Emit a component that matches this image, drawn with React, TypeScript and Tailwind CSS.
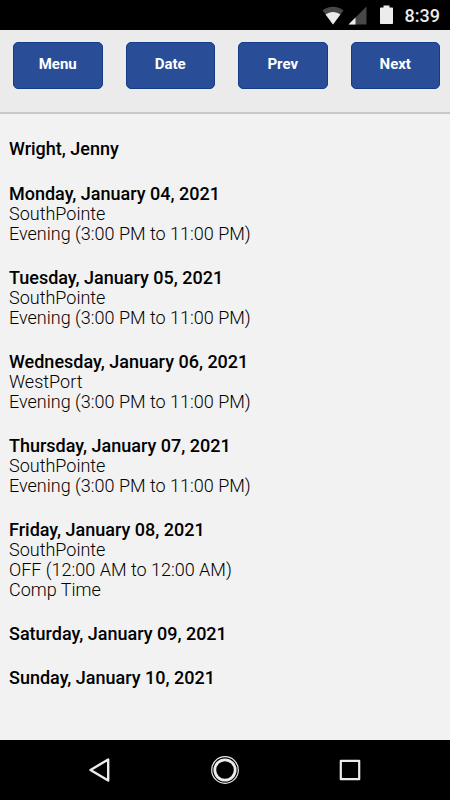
const actions = ['Menu', 'Date', 'Prev', 'Next'];

const shifts = [
  {
    date: 'Monday, January 04, 2021',
    lines: ['SouthPointe', 'Evening (3:00 PM to 11:00 PM)']
  },
  {
    date: 'Tuesday, January 05, 2021',
    lines: ['SouthPointe', 'Evening (3:00 PM to 11:00 PM)']
  },
  {
    date: 'Wednesday, January 06, 2021',
    lines: ['WestPort', 'Evening (3:00 PM to 11:00 PM)']
  },
  {
    date: 'Thursday, January 07, 2021',
    lines: ['SouthPointe', 'Evening (3:00 PM to 11:00 PM)']
  },
  {
    date: 'Friday, January 08, 2021',
    lines: ['SouthPointe', 'OFF (12:00 AM to 12:00 AM)', 'Comp Time']
  },
  { date: 'Saturday, January 09, 2021', lines: [] },
  { date: 'Sunday, January 10, 2021', lines: [] }
];

function StatusBar() {
  return (
    <div className="flex h-[30px] shrink-0 items-center justify-end bg-black pr-[10px] text-[#ececec]">
      <svg width="22" height="19" viewBox="0 0 22 19" fill="currentColor" aria-hidden="true">
        <path d="M0.5 4.5C6.5-0.5 15.5-0.5 21.5 4.5L11 18.5Z" fill="#484848" />
        <path d="M3.6 8.6C8 5.2 14 5.2 18.4 8.6L11 18.5Z" />
      </svg>
      <svg className="ml-1" width="19" height="19" viewBox="0 0 19 19" fill="currentColor" aria-hidden="true">
        <path d="M18.5 0.5V18.5H0.5Z" fill="#484848" />
        <path d="M7.5 11.5V18.5H0.5Z" />
      </svg>
      <svg className="ml-[13px]" width="13" height="20" viewBox="0 0 13 20" fill="currentColor" aria-hidden="true">
        <path d="M3.5 0.5H9.5V2.5H12C12.6 2.5 13 2.9 13 3.5V18C13 18.6 12.6 19 12 19H1C0.4 19 0 18.6 0 18V3.5C0 2.9 0.4 2.5 1 2.5H3.5Z" />
      </svg>
      <span className="ml-3 pt-0.5 text-[18px] leading-5 font-medium">8:39</span>
    </div>
  );
}

function NavBar() {
  return (
    <nav className="flex h-[60px] shrink-0 items-center justify-center gap-[97px] bg-black text-[#ececec]">
      <button type="button" aria-label="Back">
        <svg width="28" height="28" viewBox="0 0 28 28" fill="none" stroke="currentColor" strokeWidth="2.4" strokeLinejoin="round">
          <path d="M22.2 3.5V24.5L4.5 14Z" />
        </svg>
      </button>
      <button type="button" aria-label="Home">
        <svg width="28" height="28" viewBox="0 0 28 28" fill="none" stroke="currentColor">
          <circle cx="14" cy="14" r="13.3" strokeWidth="1.2" />
          <circle cx="14" cy="14" r="10.2" strokeWidth="2.8" />
        </svg>
      </button>
      <button type="button" aria-label="Recent apps">
        <svg width="28" height="28" viewBox="0 0 28 28" fill="none" stroke="currentColor" strokeWidth="2.2" strokeLinejoin="round">
          <path d="M4.8 4.8H23.2V23.2H4.8Z" />
        </svg>
      </button>
    </nav>
  );
}

export default function App() {
  return (
    <div className="flex min-h-screen flex-col bg-[#f2f2f2] font-['Roboto',sans-serif] text-black">
      <StatusBar />

      <header className="grid grid-cols-4 gap-[23px] border-b-2 border-[#c8c8c8] bg-[#ebebeb] pt-3 pr-[10px] pb-[23px] pl-[13px]">
        {actions.map((action) => (
          <button
            key={action}
            type="button"
            className="h-[47px] rounded-[5px] border border-[#133c8b] bg-[#294e97] pb-1 text-[15px] leading-5 font-bold text-white"
          >
            {action}
          </button>
        ))}
      </header>

      <main className="flex-1 px-[9px] pt-[25px] pb-6 text-[18px] leading-5 font-light">
        <h1 className="mb-[25px] font-medium">Wright, Jenny</h1>
        <div className="flex flex-col gap-6">
          {shifts.map((shift) => (
            <section key={shift.date}>
              <h2 className="font-medium">{shift.date}</h2>
              {shift.lines.map((line) => (
                <p key={line}>{line}</p>
              ))}
            </section>
          ))}
        </div>
      </main>

      <NavBar />
    </div>
  );
}
